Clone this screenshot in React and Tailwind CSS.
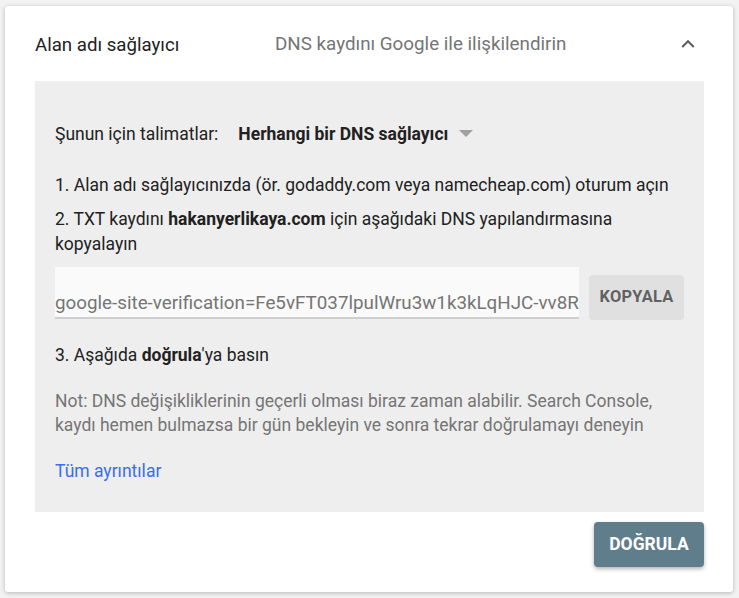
import React from "react";

export default function App() {
  return (
    <div className="w-[739px] h-[598px] bg-[#f2f2f2] pt-[6px] pl-[5px]" style={{ fontFamily: "Roboto, 'Liberation Sans', sans-serif" }}>
      <div className="w-[728px] h-[586px] bg-white rounded-[3px] shadow-[0_1px_4px_rgba(0,0,0,0.25)] pl-[30px] pr-[29px] flex flex-col">
        <div className="h-[75px] flex items-center pt-[2px]">
          <div className="w-[240px] text-[18.67px] text-[#212121]">Alan adı sağlayıcı</div>
          <div className="flex-1 text-[18.8px] text-[#757575]">DNS kaydını Google ile ilişkilendirin</div>
          <svg width="26" height="26" viewBox="0 0 24 24" className="mr-[3px] mt-[-2px]" fill="#5f5f5f">
            <path d="M12 8l-6 6 1.41 1.41L12 10.83l4.59 4.58L18 14z" />
          </svg>
        </div>
        <div className="h-[431px] bg-[#eeeeee] pl-[20px] pr-[20px] pt-[41px] text-[17.5px] text-[#212121]">
          <div className="flex items-center h-[24px]">
            <span>Şunun için talimatlar:</span>
            <span className="ml-[20px] font-bold">Herhangi bir DNS sağlayıcı</span>
            <svg width="14" height="8" viewBox="0 0 14 8" className="ml-[11px]">
              <path d="M0 0h14L7 7z" fill="#a0a0a0" />
            </svg>
          </div>
          <div className="mt-[27px] leading-[24px] whitespace-nowrap">1. Alan adı sağlayıcınızda (ör. godaddy.com veya namecheap.com) oturum açın</div>
          <p className="mt-[10px] leading-[25px]">
            2. TXT kaydını <b className="font-bold">hakanyerlikaya.com</b> için aşağıdaki DNS yapılandırmasına kopyalayın
          </p>
          <div className="mt-[10px] flex items-start">
            <div className="w-[524px] h-[52px] bg-[#fafafa] border-b-2 border-[#cfcfcf] flex items-end overflow-hidden">
              <span className="text-[18.8px] text-[#757575] whitespace-nowrap leading-[22px] pb-[3px]">google-site-verification=Fe5vFT037lpulWru3w1k3kLqHJC-vv8R</span>
            </div>
            <button className="ml-[10px] mt-[8px] w-[95px] h-[45px] bg-[#e0e0e0] rounded-[4px] text-[16.33px] font-bold text-[#616161] tracking-[0.3px]">KOPYALA</button>
          </div>
          <p className="mt-[23px] leading-[24px]">
            3. Aşağıda <b className="font-bold">doğrula</b>'ya basın
          </p>
          <div className="mt-[22px] leading-[24px] text-[#757575]">
            Not: DNS değişikliklerinin geçerli olması biraz zaman alabilir. Search Console, kaydı hemen bulmazsa bir gün bekleyin ve sonra tekrar doğrulamayı deneyin
          </div>
          <div className="mt-[22px] leading-[24px] text-[#3b6cf6]">Tüm ayrıntılar</div>
        </div>
        <div className="flex justify-end mt-[10px]">
          <button className="w-[110px] h-[45px] bg-[#607d8b] rounded-[4px] text-white font-bold text-[17.5px] shadow-[0_2px_4px_rgba(0,0,0,0.3)]">DOĞRULA</button>
        </div>
      </div>
    </div>
  );
}
